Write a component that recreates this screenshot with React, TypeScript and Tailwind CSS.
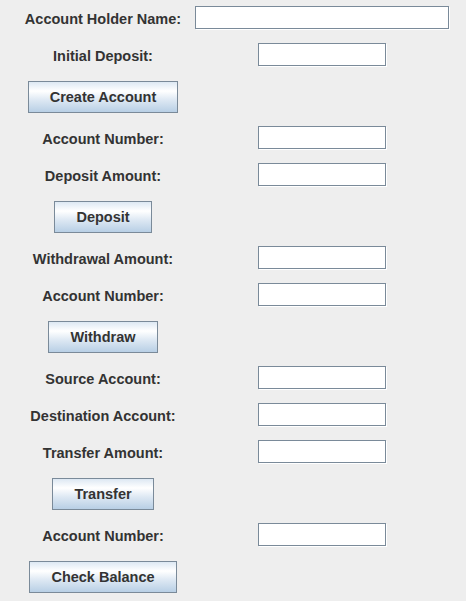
import React from "react";

type Row =
  | { kind: "field"; label: string; wide?: boolean }
  | { kind: "button"; label: string };

const rows: Row[] = [
  { kind: "field", label: "Account Holder Name:", wide: true },
  { kind: "field", label: "Initial Deposit:" },
  { kind: "button", label: "Create Account" },
  { kind: "field", label: "Account Number:" },
  { kind: "field", label: "Deposit Amount:" },
  { kind: "button", label: "Deposit" },
  { kind: "field", label: "Withdrawal Amount:" },
  { kind: "field", label: "Account Number:" },
  { kind: "button", label: "Withdraw" },
  { kind: "field", label: "Source Account:" },
  { kind: "field", label: "Destination Account:" },
  { kind: "field", label: "Transfer Amount:" },
  { kind: "button", label: "Transfer" },
  { kind: "field", label: "Account Number:" },
  { kind: "button", label: "Check Balance" },
];

function Field({ wide }: { wide?: boolean }) {
  return (
    <div
      className={`${wide ? "w-[254px]" : "w-[128px]"} h-[23px] shrink-0 border border-[#7a8a99] bg-white shadow-[1px_1px_0_0_#ffffff]`}
    />
  );
}

function SwingButton({ label }: { label: string }) {
  return (
    <button className="h-[32px] px-[21px] border border-[#7a8a99] bg-[linear-gradient(to_bottom,#dde8f3_0%,#ffffff_30%,#dde8f3_60%,#b8cfe5_100%)] text-[#333333] text-[14.5px] font-bold leading-none whitespace-nowrap">
      {label}
    </button>
  );
}

export default function App() {
  return (
    <div className="w-[466px] h-[601px] bg-[#eeeeee] font-['Liberation_Sans',Arial,sans-serif] text-[#333333] overflow-hidden">
      {rows.map((r, i) =>
        r.kind === "field" ? (
          <div key={i} className="grid grid-cols-[206px_232px] h-[37px]">
            <div className="flex justify-center items-center mt-[6px] h-[24px] pt-[3px] text-[14.5px] font-bold leading-none whitespace-nowrap">
              {r.label}
            </div>
            <div className="flex justify-center mt-[6px] h-[24px]">
              <Field wide={r.wide} />
            </div>
          </div>
        ) : (
          <div key={i} className="grid grid-cols-[206px_232px] h-[46px]">
            <div className="flex justify-center pt-[7px]">
              <SwingButton label={r.label} />
            </div>
            <div />
          </div>
        )
      )}
    </div>
  );
}
